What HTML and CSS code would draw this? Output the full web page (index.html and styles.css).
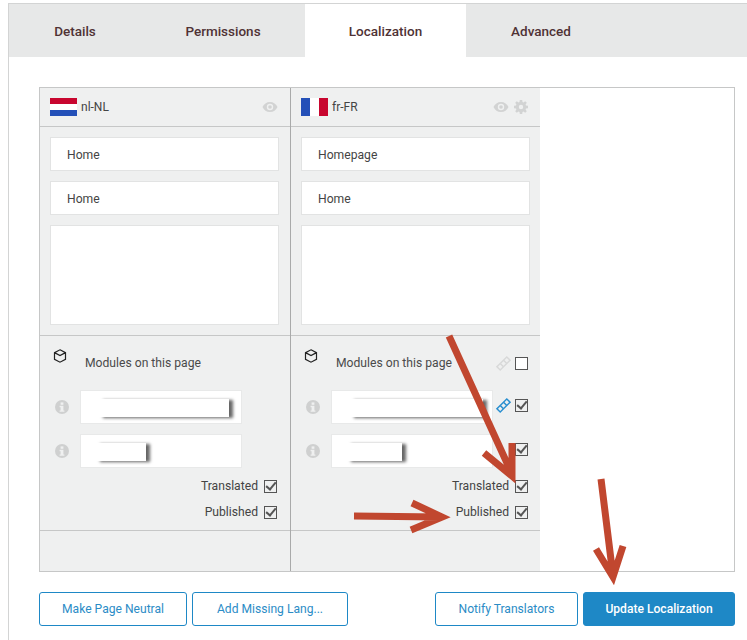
FILE: index.html
```html
<!DOCTYPE html>
<html lang="en">
<head>
  <meta charset="UTF-8" />
  <meta name="viewport" content="width=device-width, initial-scale=1.0" />
  <title>Page localization</title>
  <link rel="stylesheet" href="styles.css">
</head>
<body>
  <div class="panel">
    <nav class="tabs">
      <a class="tab tab-details">Details</a>
      <a class="tab tab-permissions">Permissions</a>
      <a class="tab tab-localization active">Localization</a>
      <a class="tab tab-advanced">Advanced</a>
    </nav>

    <div class="content">
      <div class="locales">
        <section class="locale">
          <header class="locale-head">
            <svg class="flag" viewBox="0 0 27 18"><rect width="27" height="6" fill="#c8062f"/><rect y="6" width="27" height="6" fill="#fff"/><rect y="12" width="27" height="6" fill="#2450b8"/></svg>
            <span class="locale-name">nl-NL</span>
            <span class="head-icons">
              <svg class="icon-eye" viewBox="0 0 16 12"><path d="M8 1C4.6 1 1.8 3 .5 6c1.3 3 4.1 5 7.5 5s6.2-2 7.5-5C14.2 3 11.4 1 8 1zm0 8.2A3.200 3.200 0 1 1 8 2.800a3.200 3.200 0 0 1 0 6.400zM8 4.200a1.800 1.800 0 1 0 0 3.600 1.800 1.800 0 0 0 0-3.600z"/></svg>
            </span>
          </header>
          <div class="fields">
            <div class="field">Home</div>
            <div class="field">Home</div>
            <div class="field field-area"></div>
          </div>
          <div class="modules">
            <div class="modules-title">
              <svg class="icon-cube" viewBox="0 0 14 14"><path d="M7 .8l5.500 2.800v6.800L7 13.200l-5.500-2.800V3.600zM1.500 3.600L7 6.600l5.500-3"/></svg>
              <span>Modules on this page</span>
            </div>
            <div class="module">
              <svg class="icon-info" viewBox="0 0 14 14"><circle cx="7" cy="7" r="7"/><rect x="5.600" y="2.400" width="2.800" height="2.400" fill="#eff0f0"/><path d="M4.600 5.800h3.800v4.600h1v1.400H4.600v-1.400h1V7.200h-1z" fill="#eff0f0"/></svg>
              <div class="module-box"><span class="smudge smudge-long"></span></div>
            </div>
            <div class="module">
              <svg class="icon-info" viewBox="0 0 14 14"><circle cx="7" cy="7" r="7"/><rect x="5.600" y="2.400" width="2.800" height="2.400" fill="#eff0f0"/><path d="M4.600 5.800h3.800v4.600h1v1.400H4.600v-1.400h1V7.200h-1z" fill="#eff0f0"/></svg>
              <div class="module-box"><span class="smudge smudge-short"></span></div>
            </div>
            <label class="status"><span>Translated</span><span class="check on"></span></label>
            <label class="status"><span>Published</span><span class="check on"></span></label>
          </div>
          <div class="locale-foot"></div>
        </section>

        <section class="locale">
          <header class="locale-head">
            <svg class="flag" viewBox="0 0 27 18"><rect width="9" height="18" fill="#2450b8"/><rect x="9" width="9" height="18" fill="#fff"/><rect x="18" width="9" height="18" fill="#c8062f"/></svg>
            <span class="locale-name">fr-FR</span>
            <span class="head-icons">
              <svg class="icon-eye" viewBox="0 0 16 12"><path d="M8 1C4.600 1 1.800 3 .5 6c1.300 3 4.100 5 7.500 5s6.200-2 7.500-5C14.200 3 11.400 1 8 1zm0 8.200A3.200 3.200 0 1 1 8 2.800a3.200 3.200 0 0 1 0 6.400zM8 4.200a1.800 1.800 0 1 0 0 3.600 1.800 1.800 0 0 0 0-3.600z"/></svg>
              <svg class="icon-gear" viewBox="0 0 14 14"><path fill-rule="evenodd" d="M5.800 0h2.400l.3 2 1 .4L11.200 1.200 12.800 2.800 11.600 4.500l.4 1 2 .3v2.400l-2 .3-.4 1 1.200 1.700-1.600 1.600-1.700-1.200-1 .4-.3 2H5.800l-.3-2-1-.4-1.700 1.200-1.600-1.600 1.200-1.700-.4-1-2-.3V5.800l2-.3.4-1L1.200 2.800l1.600-1.600 1.700 1.200 1-.4zM7 4.800a2.200 2.200 0 1 0 0 4.400 2.200 2.200 0 0 0 0-4.400z"/></svg>
            </span>
          </header>
          <div class="fields">
            <div class="field">Homepage</div>
            <div class="field">Home</div>
            <div class="field field-area"></div>
          </div>
          <div class="modules">
            <div class="modules-title">
              <svg class="icon-cube" viewBox="0 0 14 14"><path d="M7 .8l5.500 2.800v6.800L7 13.200l-5.500-2.800V3.600zM1.500 3.600L7 6.600l5.500-3"/></svg>
              <span>Modules on this page</span>
              <span class="row-end">
                <svg class="icon-link off" viewBox="0 0 14 14"><g transform="rotate(-45 7 7)"><rect x="-.5" y="4.500" width="15" height="5"/><path d="M4.500 4.500v5M9.500 4.500v5"/></g></svg>
                <span class="check"></span>
              </span>
            </div>
            <div class="module">
              <svg class="icon-info" viewBox="0 0 14 14"><circle cx="7" cy="7" r="7"/><rect x="5.600" y="2.400" width="2.800" height="2.400" fill="#eff0f0"/><path d="M4.600 5.800h3.800v4.600h1v1.400H4.600v-1.400h1V7.200h-1z" fill="#eff0f0"/></svg>
              <div class="module-box"><span class="smudge smudge-long"></span></div>
              <span class="row-end">
                <svg class="icon-link" viewBox="0 0 14 14"><g transform="rotate(-45 7 7)"><rect x="-.5" y="4.500" width="15" height="5"/><path d="M4.500 4.500v5M9.500 4.500v5"/></g></svg>
                <span class="check on"></span>
              </span>
            </div>
            <div class="module">
              <svg class="icon-info" viewBox="0 0 14 14"><circle cx="7" cy="7" r="7"/><rect x="5.600" y="2.400" width="2.800" height="2.400" fill="#eff0f0"/><path d="M4.600 5.800h3.800v4.600h1v1.400H4.600v-1.400h1V7.200h-1z" fill="#eff0f0"/></svg>
              <div class="module-box"><span class="smudge smudge-short"></span></div>
              <span class="row-end"><span class="check on"></span></span>
            </div>
            <label class="status"><span>Translated</span><span class="check on"></span></label>
            <label class="status"><span>Published</span><span class="check on"></span></label>
          </div>
          <div class="locale-foot"></div>
        </section>
      </div>

      <div class="actions">
        <button class="btn btn-neutral">Make Page Neutral</button>
        <button class="btn btn-missing">Add Missing Lang...</button>
        <button class="btn btn-notify">Notify Translators</button>
        <button class="btn btn-primary">Update Localization</button>
      </div>
    </div>
  </div>

  <svg class="arrows" viewBox="0 0 747 640">
    <path d="M449 336 512 474M484 453 512 476 512 443"/>
    <path d="M354 516 440 517M412 503 442 517 411 530"/>
    <path d="M601 479 613 576M596 549 613 577 623 546"/>
  </svg>
</body>
</html>
```

FILE: styles.css
```css
html, body {
  margin: 0;
  height: 640px;
  overflow: hidden;
  background-color: #fff;
}

body {
  font-family: Roboto, Arial, sans-serif;
  font-size: 12.15px;
  color: #444;
  position: relative;
}

.panel {
  margin: 3px 0 0 8px;
  border-top: 1px solid #d3d4d4;
  border-left: 1px solid #d3d4d4;
  height: 640px;
}

.tabs {
  display: flex;
  height: 53px;
  background-color: #e7e8e8;
}

.tab {
  display: flex;
  align-items: center;
  justify-content: center;
  font-size: 13.5px;
  font-weight: 500;
  color: #4f3235;
}

.tab-details { width: 132px; }
.tab-permissions { width: 164px; }
.tab-localization { width: 161px; }
.tab-advanced { width: 150px; }

.tab.active {
  background-color: #fff;
}

.content {
  padding: 30px 12px 0 30px;
}

.locales {
  display: flex;
  height: 485px;
  box-sizing: border-box;
  border: 1px solid #c6c7c7;
}

.locale {
  width: 251px;
  box-sizing: border-box;
  display: flex;
  flex-direction: column;
  background-color: #eff0f0;
  border-right: 1px solid #a9aaaa;
}

.locale:last-child {
  border-right: 0;
  width: 249px;
}

.locale-head {
  height: 39px;
  box-sizing: border-box;
  display: flex;
  align-items: center;
  padding: 0 12px 0 10px;
  border-bottom: 1px solid #c6c7c7;
}

.flag {
  width: 27px;
  height: 18px;
  margin-right: 4px;
}

.locale-name {
  font-size: 12px;
  color: #444;
}

.head-icons {
  margin-left: auto;
  display: flex;
  align-items: center;
  gap: 5px;
}

.icon-eye {
  width: 16px;
  height: 12px;
  fill: #d2d3d3;
}

.icon-gear {
  width: 14px;
  height: 14px;
  fill: #d2d3d3;
}

.fields {
  height: 209px;
  box-sizing: border-box;
  padding: 10px 0 0 10px;
  display: flex;
  flex-direction: column;
  gap: 10px;
  border-bottom: 1px solid #c6c7c7;
}

.field {
  width: 229px;
  height: 34px;
  box-sizing: border-box;
  padding: 1px 16px 0;
  display: flex;
  align-items: center;
  background-color: #fff;
  border: 1px solid #e2e3e3;
  color: #444;
}

.field-area {
  height: 100px;
}

.modules {
  height: 195px;
  box-sizing: border-box;
  padding: 0 13px 0 0;
  border-bottom: 1px solid #c6c7c7;
}

.locale:last-child .modules {
  padding-right: 12px;
}

.modules-title {
  height: 54px;
  display: flex;
  align-items: center;
  position: relative;
  padding-left: 45px;
  box-sizing: border-box;
  color: #4a4a4a;
}

.icon-cube {
  position: absolute;
  left: 13px;
  top: 13px;
  width: 14px;
  height: 14px;
  fill: none;
  stroke: #222;
  stroke-width: 1.2;
}

.row-end {
  margin-left: auto;
  display: flex;
  align-items: center;
  gap: 5px;
}

.module .row-end {
  margin-bottom: 4px;
}

.module {
  display: flex;
  align-items: center;
  height: 34px;
  margin-bottom: 10px;
  padding-left: 15px;
}

.icon-info {
  width: 14px;
  height: 14px;
  fill: #cfd0d0;
  margin-right: 11px;
  flex: none;
}

.module-box {
  width: 162px;
  height: 34px;
  box-sizing: border-box;
  background-color: #fff;
  border: 1px solid #e8e9e9;
  padding: 8px 0 0 18px;
  flex: none;
}

.smudge {
  display: block;
  height: 18px;
  background-color: #fff;
  box-shadow: 4px 1px 3px rgba(0, 0, 0, 0.6);
  clip-path: inset(-6px -8px -6px 0);
}

.smudge-long { width: 130px; }

.smudge-short {
  width: 50px;
  margin-left: -3px;
}

.locale:last-child .smudge-long { width: 133px; }
.locale:last-child .smudge-short { width: 55px; }

.module + .status {
  margin-top: -5px;
}

.status {
  display: flex;
  justify-content: flex-end;
  align-items: center;
  gap: 6px;
  height: 26px;
  color: #444;
}

.check {
  display: inline-block;
  position: relative;
  width: 11px;
  height: 11px;
  background-color: #fff;
  border: 1px solid #555;
  flex: none;
}

.check.on {
  background-color: transparent;
}

.check.on::after {
  content: "";
  position: absolute;
  left: 3px;
  top: -1px;
  width: 4px;
  height: 8px;
  border-right: 2px solid #555;
  border-bottom: 2px solid #555;
  transform: rotate(40deg);
}

.icon-link {
  width: 13px;
  height: 13px;
  fill: none;
  stroke: #2a8fd0;
  stroke-width: 1.6;
  overflow: visible;
}

.icon-link.off {
  stroke: #d8d9d9;
}

.locale-foot {
  flex: 1;
}

.actions {
  display: flex;
  margin-top: 20px;
  gap: 5px;
}

.btn {
  height: 34px;
  font-family: Roboto, Arial, sans-serif;
  font-size: 12.1px;
  color: #2b8cc6;
  background-color: #fff;
  border: 1px solid #1e88c6;
  border-radius: 3px;
  padding: 0;
}

.btn-neutral { width: 148px; }
.btn-missing { width: 156px; }
.btn-notify { width: 143px; margin-left: auto; }

.btn-primary {
  width: 152px;
  background-color: #1e88c6;
  color: #fff;
  font-weight: 500;
}

.arrows {
  position: absolute;
  left: 0;
  top: 0;
  width: 747px;
  height: 640px;
  fill: none;
  stroke: #c1472f;
  stroke-width: 7;
  stroke-miterlimit: 12;
  pointer-events: none;
}
```
